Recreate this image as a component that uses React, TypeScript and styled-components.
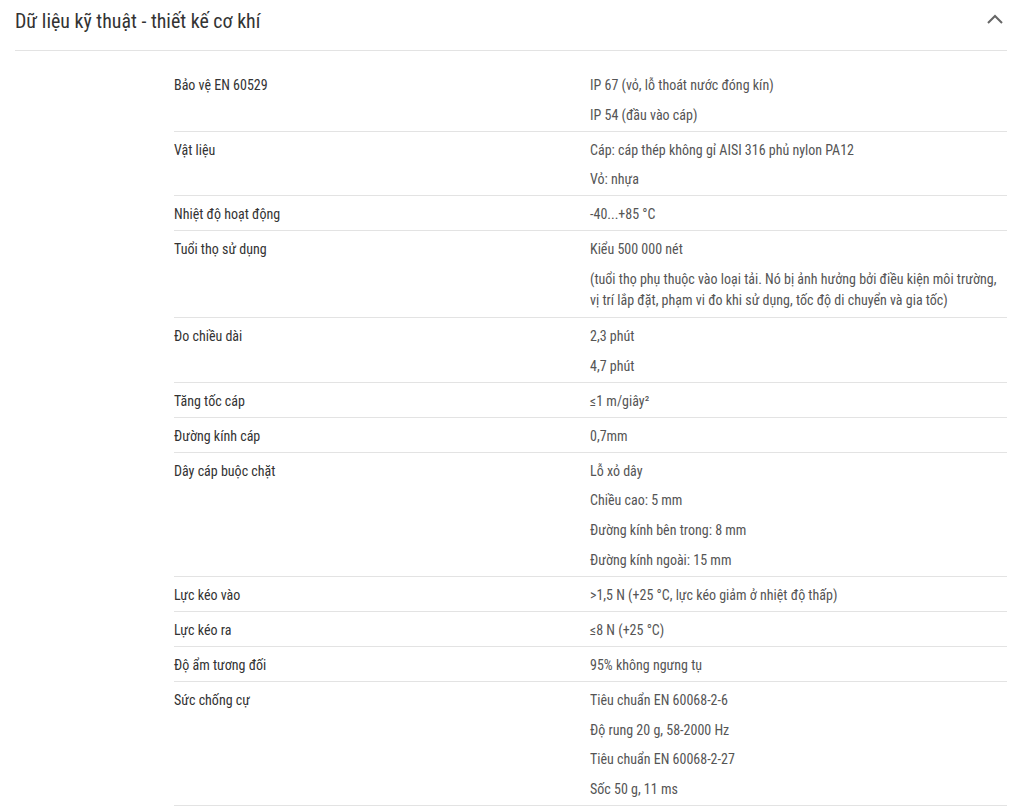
import React from "react";
import styled, { createGlobalStyle } from "styled-components";

const Global = createGlobalStyle`
  html, body { margin: 0; padding: 0; background: #fff; }
  body {
    font-family: "Roboto Condensed", Roboto, "Noto Sans", sans-serif;
    font-stretch: condensed;
  }
`;

const Section = styled.section`
  padding: 0 10px 0 15px;
`;

const Header = styled.div`
  display: flex;
  align-items: center;
  justify-content: space-between;
  height: 51px;
  padding-bottom: 7px;
  border-bottom: 1px solid #e3e3e3;
  box-sizing: border-box;
`;

const Title = styled.h2`
  margin: 0;
  font-size: 19.9px;
  line-height: 28px;
  font-weight: 400;
  color: #333;
`;

const Toggle = styled.button`
  border: 0;
  background: none;
  padding: 0;
  width: 16px;
  height: 10px;
  margin: -5px 4px 0 0;
  display: flex;
  color: #666;
  cursor: pointer;
`;

const Table = styled.div`
  margin: 16px 0 0 159px;
`;

const Row = styled.div`
  display: grid;
  grid-template-columns: 416px 1fr;
  padding: 8px 0 6px;
  border-bottom: 1px solid #e3e3e3;
  font-size: 14px;
  line-height: 20px;
`;

const Label = styled.div`
  color: #333;
`;

const Values = styled.div`
  display: flex;
  flex-direction: column;
  gap: 9.7px;
  color: #555;
`;

const Value = styled.p<{ $long?: boolean }>`
  margin: 0;
  line-height: ${(p) => (p.$long ? "21px" : "20px")};
`;

type Spec = { label: string; values: string[] };

const rows: Spec[] = [
  { label: "Bảo vệ EN 60529", values: ["IP 67 (vỏ, lỗ thoát nước đóng kín)", "IP 54 (đầu vào cáp)"] },
  { label: "Vật liệu", values: ["Cáp: cáp thép không gỉ AISI 316 phủ nylon PA12", "Vỏ: nhựa"] },
  { label: "Nhiệt độ hoạt động", values: ["-40...+85 °C"] },
  {
    label: "Tuổi thọ sử dụng",
    values: [
      "Kiểu 500 000 nét",
      "(tuổi thọ phụ thuộc vào loại tải. Nó bị ảnh hưởng bởi điều kiện môi trường, vị trí lắp đặt, phạm vi đo khi sử dụng, tốc độ di chuyển và gia tốc)",
    ],
  },
  { label: "Đo chiều dài", values: ["2,3 phút", "4,7 phút"] },
  { label: "Tăng tốc cáp", values: ["≤1 m/giây²"] },
  { label: "Đường kính cáp", values: ["0,7mm"] },
  {
    label: "Dây cáp buộc chặt",
    values: ["Lỗ xỏ dây", "Chiều cao: 5 mm", "Đường kính bên trong: 8 mm", "Đường kính ngoài: 15 mm"],
  },
  { label: "Lực kéo vào", values: [">1,5 N (+25 °C, lực kéo giảm ở nhiệt độ thấp)"] },
  { label: "Lực kéo ra", values: ["≤8 N (+25 °C)"] },
  { label: "Độ ẩm tương đối", values: ["95% không ngưng tụ"] },
  {
    label: "Sức chống cự",
    values: ["Tiêu chuẩn EN 60068-2-6", "Độ rung 20 g, 58-2000 Hz", "Tiêu chuẩn EN 60068-2-27", "Sốc 50 g, 11 ms"],
  },
];

export default function App() {
  return (
    <>
      <Global />
      <Section>
        <Header>
          <Title>Dữ liệu kỹ thuật - thiết kế cơ khí</Title>
          <Toggle aria-label="Thu gọn">
            <svg width="16" height="10" viewBox="0 0 16 10" fill="none">
              <path d="M1 9 L8 2 L15 9" stroke="currentColor" strokeWidth="2" />
            </svg>
          </Toggle>
        </Header>
        <Table>
          {rows.map((r) => (
            <Row key={r.label}>
              <Label>{r.label}</Label>
              <Values>
                {r.values.map((v) => (
                  <Value key={v} $long={v.length > 90}>
                    {v}
                  </Value>
                ))}
              </Values>
            </Row>
          ))}
        </Table>
      </Section>
    </>
  );
}
